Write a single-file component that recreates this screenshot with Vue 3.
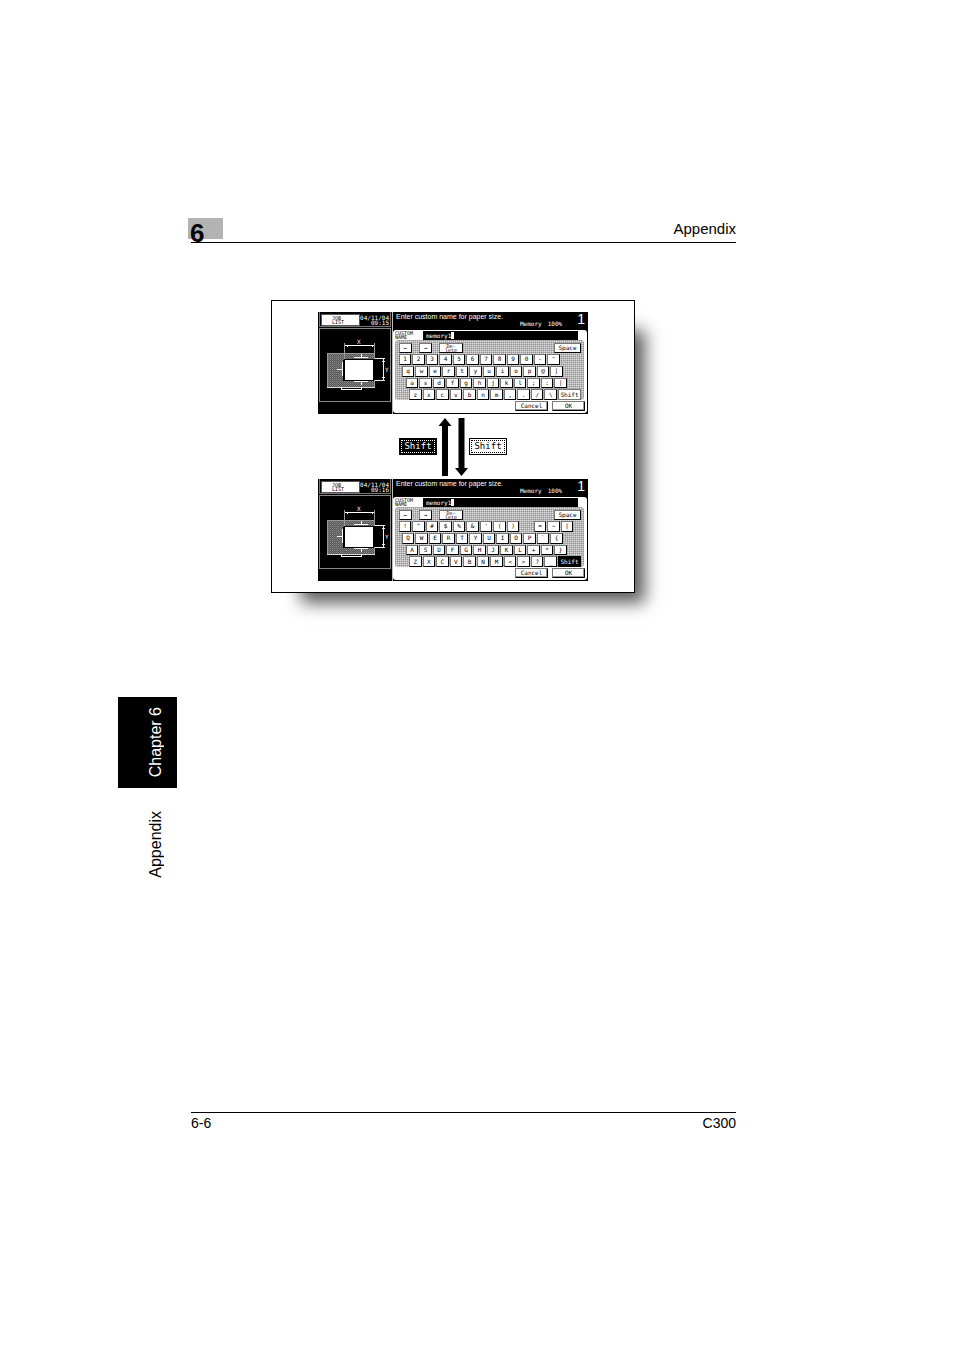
<script setup>
const screens = [
  {
    id: 'lower',
    time: '09:15',
    rows: ['1234567890-^', 'qwertyuiop@[', 'asdfghjkl;:]', 'zxcvbnm,./\\'],
    shifted: false,
  },
  {
    id: 'upper',
    time: '09:16',
    rows: ['!"#$%&\'() =~|', 'QWERTYUIOP`{', 'ASDFGHJKL+*}', 'ZXCVBNM<>?_'],
    shifted: true,
  },
]
</script>

<template>
  <div class="page">
    <aside class="side">
      <div class="tab"><span class="vertical">Chapter 6</span></div>
      <div class="section"><span class="vertical">Appendix</span></div>
    </aside>

    <div class="sheet">
      <header class="head">
        <span class="badge">6</span>
        <span class="title">Appendix</span>
      </header>

      <main class="body">
        <figure class="figure">
          <template v-for="(s, i) in screens" :key="s.id">
            <section class="screen">
              <div class="left">
                <div class="status">
                  <button class="job" type="button">JOB<br />LIST</button>
                  <div class="clock">04/11/04<br />{{ s.time }}</div>
                </div>
                <div class="diagram">
                  <svg viewBox="0 0 70 71" width="70" height="71" shape-rendering="crispEdges">
                    <defs>
                      <pattern :id="'hatch-' + s.id" width="2" height="2" patternUnits="userSpaceOnUse">
                        <rect width="2" height="2" fill="#585858" />
                        <rect width="1" height="1" fill="#888" />
                        <rect x="1" y="1" width="1" height="1" fill="#747474" />
                      </pattern>
                    </defs>
                    <rect x="7" y="24" width="48" height="34" :fill="`url(#hatch-${s.id})`" />
                    <path d="M7.5 58V24.5H54.5V58" fill="none" stroke="#999" />
                    <path d="M7 58.5H55" stroke="#ddd" />
                    <path d="M24.5 14V31M54.5 14V31" stroke="#999" />
                    <path d="M25 16.5H54M27 15.5V18M52 15.5V18" stroke="#fff" />
                    <rect x="23" y="30" width="32" height="22" rx="2" fill="#000" />
                    <rect x="25" y="31" width="28" height="20" fill="#fff" />
                    <path d="M17 40.5H22M22.5 33V47" stroke="#fff" fill="none" />
                    <path d="M34 28.5H48M41.5 25V28M34 52.5H48M41.5 53V56" stroke="#fff" />
                    <path d="M55 29.5H65M55 51.5H65M63.5 30V51M62 32.5H65M62 48.5H65" stroke="#eee" />
                    <path d="M21.5 58V60.5H41.5V58" fill="none" stroke="#fff" stroke-width="1" />
                    <text x="37" y="15" class="axis">X</text>
                    <text x="65" y="43" class="axis">Y</text>
                  </svg>
                </div>
              </div>

              <div class="right">
                <div class="prompt">
                  <div>
                    <div class="message">Enter custom name for paper size.</div>
                    <div class="memory"><span>Memory</span><span>100%</span></div>
                  </div>
                  <div class="count">1</div>
                </div>
                <div class="panel">
                  <div class="name-row">
                    <label class="name-label" :for="'name-' + s.id">CUSTOM<br />NAME</label>
                    <div class="name-bar">
                      <input :id="'name-' + s.id" class="name" type="text" value="memory1" />
                      <i class="caret"></i>
                    </div>
                  </div>
                  <div class="pad">
                    <div class="tools">
                      <button class="key arrow" type="button">←</button>
                      <button class="key arrow" type="button">→</button>
                      <button class="key delete" type="button">De-<br />lete</button>
                      <button class="key space" type="button">Space</button>
                    </div>
                    <div class="keys">
                      <div v-for="(row, r) in s.rows" :key="r" class="row" :class="'row-' + r">
                        <template v-for="(c, k) in row" :key="k">
                          <span v-if="c === ' '" class="blank"></span>
                          <button v-else class="key char" type="button">{{ c }}</button>
                        </template>
                        <button v-if="r === 3" class="key shift" :class="{ on: s.shifted }" type="button">Shift</button>
                      </div>
                    </div>
                  </div>
                  <div class="actions">
                    <button class="action" type="button">Cancel</button>
                    <button class="action" type="button">OK</button>
                  </div>
                </div>
              </div>
            </section>

            <div v-if="i === 0" class="between">
              <button class="toggle dark" type="button">Shift</button>
              <svg width="32" height="58" viewBox="0 0 32 58">
                <path d="M8 0L14.500 8H11V58H5V8H1.500Z" fill="#000" />
                <path d="M24.500 58L18 50H21.500V0H27.500V50H31Z" fill="#000" />
              </svg>
              <button class="toggle light" type="button">Shift</button>
            </div>
          </template>
        </figure>
      </main>

      <footer class="foot">
        <span>6-6</span>
        <span>C300</span>
      </footer>
    </div>
  </div>
</template>

<style>
body {
  background: #fff;
}
</style>

<style scoped>
.page,
.page * {
  box-sizing: border-box;
}
.page {
  display: grid;
  grid-template-columns: 59px 1fr;
  column-gap: 14px;
  padding: 218px 218px 200px 118px;
  font-family: "Liberation Sans", Arial, sans-serif;
  color: #000;
}
button {
  margin: 0;
  padding: 0;
  font: inherit;
  color: inherit;
}

.side {
  padding-top: 479px;
}
.tab,
.section {
  display: flex;
  justify-content: flex-end;
  padding-right: 12px;
  font-size: 16px;
  line-height: 18px;
}
.tab {
  height: 91px;
  align-items: center;
  background: #000;
  color: #fff;
}
.section {
  padding-top: 23px;
}
.vertical {
  writing-mode: vertical-rl;
  transform: rotate(180deg);
}

.head {
  display: flex;
  justify-content: space-between;
  height: 25px;
  border-bottom: 1px solid #000;
}
.badge {
  width: 35px;
  height: 21px;
  margin-left: -3px;
  padding-left: 2px;
  background: #b3b3b3;
  font-size: 26px;
  line-height: 30px;
  font-weight: bold;
}
.title {
  font-size: 15px;
  line-height: 22px;
}
.body {
  min-height: 869px;
  padding: 57px 0 0 80px;
}
.foot {
  display: flex;
  justify-content: space-between;
  padding-top: 1px;
  border-top: 1px solid #000;
  font-size: 14px;
  line-height: 18px;
}

.figure {
  width: 364px;
  margin: 0;
  padding: 11px 46px;
  border: 1px solid #000;
  background: #fff;
  box-shadow: 20px 20px 16px -10px rgba(0, 0, 0, 0.64);
}
.screen {
  display: grid;
  grid-template-columns: 74px 1fr;
  height: 102px;
  background: #000;
  color: #fff;
  font-family: "DejaVu Sans Mono", monospace;
  font-size: 6px;
  line-height: 6px;
}
.left {
  padding: 0 1px;
}
.status {
  display: flex;
  justify-content: space-between;
  height: 15px;
  padding: 3px 1px 0 2px;
  border: 1px solid #777;
  border-top: 0;
}
.job {
  width: 37px;
  height: 10px;
  padding-left: 9px;
  border: 1px solid #fff;
  outline: 1px solid #555;
  background: #fff;
  color: #000;
  font-size: 5px;
  line-height: 4px;
  text-align: left;
}
.clock {
  line-height: 5px;
  text-align: right;
}
.diagram {
  height: 74px;
  margin-top: 1px;
  border: 1px solid #888;
}
.diagram svg {
  display: block;
}
.axis {
  fill: #fff;
  font-size: 6px;
}

.right {
  padding-right: 1px;
  border-left: 1px solid #bbb;
}
.prompt {
  display: flex;
  justify-content: space-between;
  height: 18px;
  padding: 1px 2px 0 3px;
  font-family: "Liberation Sans", Arial, sans-serif;
  font-size: 7px;
  line-height: 7px;
  white-space: nowrap;
}
.memory {
  display: flex;
  gap: 6px;
  padding-left: 124px;
  font-family: "DejaVu Sans Mono", monospace;
  font-size: 6px;
}
.count {
  font-size: 14px;
  line-height: 13px;
}
.panel {
  height: 83px;
  padding: 1px 2px 0;
  border-radius: 3px;
  background: #fff;
  color: #000;
}
.name-row {
  display: flex;
  height: 9px;
}
.name-label {
  width: 28px;
  padding: 0;
  font-size: 5px;
  line-height: 4px;
}
.name-bar {
  display: flex;
  align-items: center;
  flex: 1;
  margin-right: 7px;
  padding-left: 3px;
  background: #000;
}
.name {
  width: 25px;
  height: 9px;
  margin: 0;
  padding: 0;
  border: 0;
  background: transparent;
  color: #fff;
  font: 6px/9px "DejaVu Sans Mono", monospace;
}
.caret {
  width: 3px;
  height: 7px;
  background: #fff;
}
.pad {
  height: 60px;
  margin-right: 1px;
  padding: 3px 0 0 4px;
  border-radius: 3px;
  background:
    repeating-linear-gradient(90deg, rgba(0, 0, 0, 0.18) 0 1px, transparent 1px 2px),
    repeating-linear-gradient(rgba(0, 0, 0, 0.18) 0 1px, transparent 1px 2px),
    #dedede;
}
.key {
  border: 1px solid #000;
  border-top-color: #777;
  border-left-color: #777;
  background: #fff;
  color: #000;
  line-height: 8px;
  text-align: center;
  white-space: nowrap;
}
.tools {
  display: flex;
  height: 10px;
  padding-right: 3px;
}
.arrow {
  width: 13px;
  margin-right: 7px;
  font-size: 6px;
}
.delete {
  width: 24px;
  font-size: 5px;
  line-height: 4px;
}
.space {
  width: 27px;
  margin-left: auto;
}
.keys {
  display: grid;
  grid-template-rows: repeat(4, 1fr);
  row-gap: 1px;
  height: 46px;
  margin-top: 1px;
}
.row {
  display: flex;
  gap: 1px;
}
.row-1 {
  padding-left: 3px;
}
.row-2 {
  padding-left: 7px;
}
.row-3 {
  padding: 0 3px 0 10px;
}
.row-0 > *,
.row-1 > *,
.row-2 > * {
  flex: 0 0 auto;
  width: 12px;
}
.row-0 > :nth-child(even),
.row-1 > :nth-child(even),
.row-2 > :nth-child(even) {
  width: 13px;
}
.row-3 > .char {
  flex: 1;
}
.shift {
  flex: 0 0 23px;
  border-color: #777;
}
.shift.on {
  border-color: #000;
  background: #000;
  color: #fff;
}
.actions {
  display: flex;
  justify-content: flex-end;
  gap: 4px;
  padding-top: 1px;
}
.action {
  width: 33px;
  height: 10px;
  border: 1px solid #000;
  border-top-color: #777;
  border-left-color: #777;
  border-radius: 1px;
  background: #fff;
  box-shadow: inset -1px -1px 0 #999;
  color: #000;
  line-height: 8px;
}

.between {
  display: flex;
  align-items: center;
  justify-content: center;
  height: 65px;
}
.between svg {
  display: block;
}
.toggle {
  width: 38px;
  height: 17px;
  border: 1px solid #000;
  font-family: "DejaVu Sans Mono", monospace;
  font-size: 9px;
  line-height: 13px;
  outline: 1px dotted #000;
  outline-offset: -3px;
}
.dark {
  background: #000;
  color: #fff;
  outline-color: #fff;
}
.light {
  background: #fff;
  color: #000;
}
</style>
